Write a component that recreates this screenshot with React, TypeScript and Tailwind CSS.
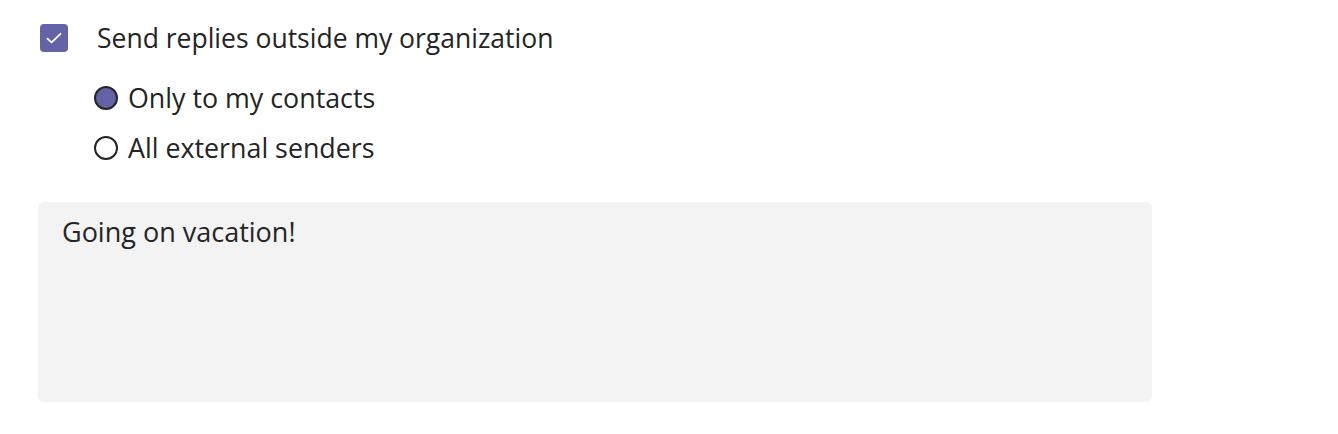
export default function App() {
  return (
    <div className="w-[1338px] h-[434px] bg-white text-[#242424] font-['Open_Sans',sans-serif]">
      <div className="pl-[40px] pt-[24px] flex flex-col">
        <label className="flex items-center h-[28px]">
          <span className="w-[28px] h-[28px] shrink-0 rounded-[4px] bg-[#6264a7] flex items-center justify-center">
            <svg className="w-[16px] h-[16px] shrink-0" viewBox="0 0 16 16" fill="none">
              <path d="M1.5 8.8 L5.6 12.4 L14.5 3.8" stroke="#ffffff" strokeWidth="1.8" strokeLinecap="round" strokeLinejoin="round" />
            </svg>
          </span>
          <span className="ml-[29px] text-[26.5px] leading-none">Send replies outside my organization</span>
        </label>

        <div className="pl-[54px] mt-[34px] flex flex-col gap-[26px]">
          <label className="flex items-center h-[24px]">
            <span className="w-[24px] h-[24px] rounded-full border-2 border-[#252423] bg-[#6264a7]" />
            <span className="ml-[10px] text-[26.8px] leading-none">Only to my contacts</span>
          </label>
          <label className="flex items-center h-[24px]">
            <span className="w-[24px] h-[24px] rounded-full border-2 border-[#252423] bg-white" />
            <span className="ml-[10px] text-[26.8px] leading-none">All external senders</span>
          </label>
        </div>
      </div>

      <div className="ml-[38px] mt-[42px] w-[1114px] h-[200px] rounded-[6px] bg-[#f3f3f3] px-[24px] pt-[14px]">
        <p className="text-[27px] leading-[32px]">Going on vacation!</p>
      </div>
    </div>
  );
}
